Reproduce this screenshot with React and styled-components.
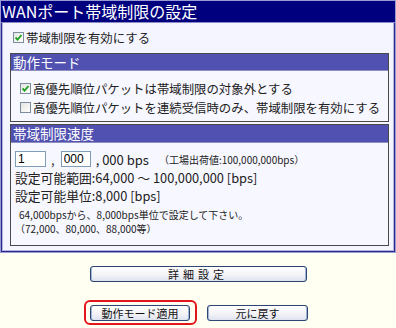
import React from 'react'
import styled, { createGlobalStyle } from 'styled-components'

const GlobalStyle = createGlobalStyle`
  html, body {
    margin: 0;
    padding: 0;
    background: #fffff2;
  }
  body {
    font-family: "Noto Sans CJK JP", "Liberation Sans", sans-serif;
    color: #222;
  }
`

const Page = styled.div`
  width: 396px;
  height: 328px;
  overflow: hidden;
`

const Panel = styled.div`
  border: 1px solid #9a9ad4;
  box-shadow: inset 0 0 0 1px #2a2a8e, inset 0 0 0 2px #b4b4e0;
  background: #f5f5ff;
`

const TitleBar = styled.div`
  height: 21px;
  line-height: 21px;
  background: #00007f;
  border-bottom: 1px solid #8a8ac8;
  color: #fff;
  font-size: 16px;
  padding-left: 1px;
  white-space: nowrap;
`

const PanelBody = styled.div`
  padding: 7px 6px 6px 9px;
`

const CheckRow = styled.div`
  display: flex;
  align-items: center;
  height: ${p => p.$h || 19}px;
  font-size: 12.4px;
  white-space: nowrap;
  padding-left: ${p => p.$indent || 0}px;
  margin-bottom: ${p => p.$after || 0}px;
`

const Box = styled.span`
  width: 11px;
  height: 11px;
  box-sizing: border-box;
  border: 1px solid #7d8da0;
  background: linear-gradient(135deg, #e4e4e0, #ffffff);
  margin-right: 2px;
  display: inline-flex;
  align-items: center;
  justify-content: center;
  flex: none;
`

const Check = ({ checked }) => (
  <Box>
    {checked && (
      <svg width="9" height="9" viewBox="0 0 9 9">
        <path d="M1.5 4.5 L3.6 6.6 L7.5 2" fill="none" stroke="#21a121" strokeWidth="1.8" />
      </svg>
    )}
  </Box>
)

const Section = styled.div`
  border: 1px solid #4a4a4a;
  background: #f7f7ff;
  margin-bottom: ${p => p.$after || 0}px;
`

const SectionHeader = styled.div`
  height: ${p => p.$h || 16}px;
  line-height: ${p => p.$h || 16}px;
  background: #5151b2;
  color: #fff;
  font-size: 13.5px;
  padding-left: 2px;
  border-bottom: 1px solid #8e8ec0;
`

const SectionBody = styled.div`
  padding: ${p => p.$pad};
`

const InputRow = styled.div`
  display: flex;
  align-items: center;
  height: 16px;
  font-size: 13px;
  white-space: nowrap;
`

const Field = styled.input`
  width: ${p => p.$w}px;
  height: 16px;
  box-sizing: border-box;
  border: 1px solid #7f9db9;
  background: #fff;
  font: 12px "Liberation Sans", sans-serif;
  padding: 0 2px;
  margin: 0 5px 0 0;
  outline: none;
`

const Sep = styled.span`
  margin-right: 6px;
  color: #444;
`

const Note = styled.span`
  font-size: 10px;
  margin-left: 10px;
`

const Line = styled.div`
  font-size: 12.8px;
  line-height: 18px;
  white-space: nowrap;
  margin-top: ${p => p.$top || 0}px;
`

const Small = styled.div`
  font-size: 10px;
  line-height: 14px;
  white-space: nowrap;
  padding-left: ${p => p.$indent || 0}px;
  margin-top: ${p => p.$top || 0}px;
`

const Actions = styled.div`
  display: flex;
  flex-direction: column;
  align-items: center;
  padding-top: 13px;
`

const ButtonRow = styled.div`
  display: flex;
  align-items: center;
  gap: 10px;
  margin-top: 18px;
  margin-right: 4px;
`

const Button = styled.button`
  width: ${p => p.$w}px;
  height: 16px;
  box-sizing: border-box;
  padding: 0;
  border: 1px solid #2c4670;
  border-radius: 3px;
  background: linear-gradient(#ffffff, #f2f2f6 60%, #dde3ee);
  box-shadow: inset 1px 0 0 #9fb4d6, inset -1px 0 0 #9fb4d6;
  font: 11px "Noto Sans CJK JP", sans-serif;
  letter-spacing: ${p => p.$spacing || 0}px;
  color: #111;
  line-height: 14px;
`

const Highlight = styled.div`
  border: 2px solid #e3161c;
  border-radius: 6px;
  padding: 3px 5px 2px 4px;
  display: flex;
`

export default function App() {
  return (
    <Page>
      <GlobalStyle />
      <Panel>
        <TitleBar>WANポート帯域制限の設定</TitleBar>
        <PanelBody>
          <CheckRow $h={15} $indent={3} $after={8}>
            <Check checked />帯域制限を有効にする
          </CheckRow>
          <Section $after={2}>
            <SectionHeader>動作モード</SectionHeader>
            <SectionBody $pad="8px 0 4px 9px">
              <CheckRow>
                <Check checked />高優先順位パケットは帯域制限の対象外とする
              </CheckRow>
              <CheckRow>
                <Check />高優先順位パケットを連続受信時のみ、帯域制限を有効にする
              </CheckRow>
            </SectionBody>
          </Section>
          <Section>
            <SectionHeader $h={17}>帯域制限速度</SectionHeader>
            <SectionBody $pad="8px 0 9px 4px">
              <InputRow>
                <Field $w={31} defaultValue="1" readOnly />
                <Sep>,</Sep>
                <Field $w={30} defaultValue="000" readOnly />
                <span>, 000 bps</span>
                <Note>（工場出荷値:100,000,000bps）</Note>
              </InputRow>
              <Line $top={2}>設定可能範囲:64,000 ～ 100,000,000 [bps]</Line>
              <Line>設定可能単位:8,000 [bps]</Line>
              <Small $indent={4} $top={3}>64,000bpsから、8,000bps単位で設定して下さい。</Small>
              <Small>（72,000、80,000、88,000等）</Small>
            </SectionBody>
          </Section>
        </PanelBody>
      </Panel>
      <Actions>
        <Button $w={217} $spacing={4}>詳細設定</Button>
        <ButtonRow>
          <Highlight>
            <Button $w={100}>動作モード適用</Button>
          </Highlight>
          <Button $w={101}>元に戻す</Button>
        </ButtonRow>
      </Actions>
    </Page>
  )
}
